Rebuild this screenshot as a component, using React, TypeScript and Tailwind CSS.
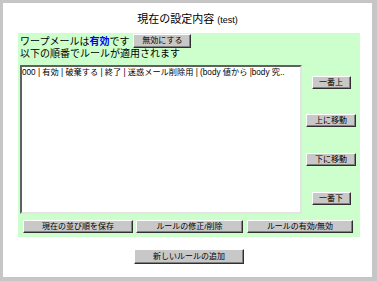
import React from 'react'

const FONT = { fontFamily: '"Liberation Sans", "Noto Sans CJK JP", sans-serif' }

// classic raised button: white top/left, dark bottom/right
function Btn({ children, w, h = 13, className = '' }: { children: React.ReactNode; w: number; h?: number; className?: string }) {
  return (
    <button
      className={`flex items-center justify-center bg-[#c8c8c8] border border-t-white border-l-white border-b-[#303030] border-r-[#303030] shadow-[inset_-1px_-1px_0_#808080] text-[8px] leading-none text-black p-0 ${className}`}
      style={{ width: w, height: h }}
    >
      {children}
    </button>
  )
}

export default function App() {
  return (
    <div className="w-[377px] h-[281px] bg-[#c6c6c6] pt-[3px] pl-[3px] pr-[5px] pb-[4px]" style={FONT}>
      <div className="w-full h-full bg-white">
        {/* title */}
        <div className="h-[29px] pt-[10px] text-center text-[11px] leading-[13px] text-black">
          現在の設定内容 <span className="text-[9px]">(test)</span>
        </div>

        <div className="ml-[15px] w-[342px] h-[204px] bg-[#ccffcc] pl-[2px]">
          <div className="flex items-end h-[15px] mt-[1px]">
            <span className="text-[10px] leading-[12px] text-black">
              ワープメールは<b className="text-[#0000ff]">有効</b>です
            </span>
            <Btn w={58} h={14} className="ml-[4px]">無効にする</Btn>
          </div>
          <div className="text-[10px] leading-[12px] text-black">以下の順番でルールが適用されます</div>

          <div className="flex mt-[5px]">
            <div className="w-[282px] h-[149px] bg-white border-2 border-t-[#606060] border-l-[#606060] border-b-[#e4e4e4] border-r-[#e4e4e4]">
              <div className="text-[8.2px] leading-[10px] text-black whitespace-nowrap overflow-hidden pt-[1px]">
                000 | 有効 | 破棄する | 終了 | 迷惑メール削除用 | (body 値から |body 究..
              </div>
            </div>
            <div className="w-[58px] flex flex-col items-center">
              <Btn w={39} className="mt-[11px]">一番上</Btn>
              <Btn w={50} className="mt-[25px]">上に移動</Btn>
              <Btn w={50} className="mt-[26px]">下に移動</Btn>
              <Btn w={39} className="mt-[26px]">一番下</Btn>
            </div>
          </div>

          <div className="flex mt-[6px] ml-[3px]">
            <Btn w={110}>現在の並び順を保存</Btn>
            <Btn w={107} className="ml-[3px]">ルールの修正/削除</Btn>
            <Btn w={106} className="ml-[4px]">ルールの有効/無効</Btn>
          </div>
        </div>

        <div className="mt-[12px] ml-[131px]">
          <Btn w={110} h={15}>新しいルールの追加</Btn>
        </div>
      </div>
    </div>
  )
}
